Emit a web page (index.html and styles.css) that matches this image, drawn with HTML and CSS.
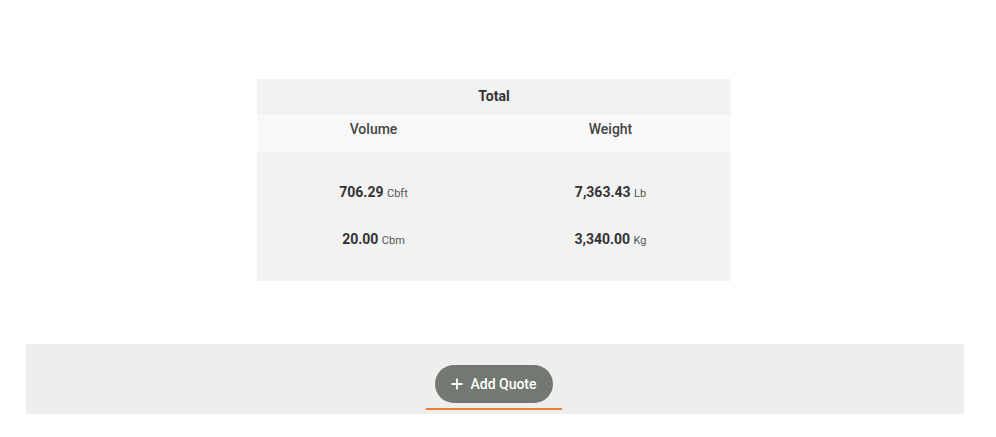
FILE: index.html
```html
<!DOCTYPE html>
<html>
<head>
<meta charset="utf-8">
<link rel="stylesheet" href="styles.css">
</head>
<body>
<div class="page">
  <div class="totals">
    <div class="title">Total</div>
    <div class="head">
      <div class="cell">Volume</div>
      <div class="cell">Weight</div>
    </div>
    <div class="body">
      <div class="row">
        <div class="cell"><b>706.29</b> <span class="unit">Cbft</span></div>
        <div class="cell"><b>7,363.43</b> <span class="unit">Lb</span></div>
      </div>
      <div class="row">
        <div class="cell"><b>20.00</b> <span class="unit">Cbm</span></div>
        <div class="cell"><b>3,340.00</b> <span class="unit">Kg</span></div>
      </div>
    </div>
  </div>
  <div class="bar">
    <div class="btn-wrap">
      <button class="add-btn">
        <svg width="12" height="12" viewBox="0 0 12 12"><path d="M6 0.5V11.5M0.5 6H11.5" stroke="#fff" stroke-width="1.8" fill="none"/></svg>
        <span>Add Quote</span>
      </button>
    </div>
  </div>
</div>
</body>
</html>
```

FILE: styles.css
```css
* { box-sizing: border-box; }
html, body { margin: 0; padding: 0; background: #fff; }
body {
  font-family: Roboto, "Liberation Sans", Arial, sans-serif;
  color: #333;
  font-size: 14px;
}
.page {
  padding-top: 79px;
  display: flex;
  flex-direction: column;
  align-items: center;
}
.totals {
  width: 474px;
  margin-left: -8px;
}
.title {
  height: 36px;
  background: #f2f2f2;
  display: flex;
  align-items: center;
  justify-content: center;
  font-weight: 700;
  font-size: 14px;
  padding-bottom: 3px;
}
.head {
  height: 37px;
  background: #f9f9f9;
  display: grid;
  grid-template-columns: 1fr 1fr;
  align-items: center;
  font-weight: 500;
  color: #444;
  padding-bottom: 9px;
}
.cell { text-align: center; }
.head .cell { padding-right: 4px; }
.body {
  background: #f2f2f2;
  padding: 16px 0 19px;
}
.row {
  height: 47px;
  display: grid;
  grid-template-columns: 1fr 1fr;
  align-items: center;
}
.row .cell { padding-right: 4px; }
.row b { font-weight: 700; font-size: 14px; color: #333; }
.unit { font-size: 11px; color: #555; }
.bar {
  margin-top: 63px;
  width: 938px;
  height: 70px;
  background: #eeeeee;
  display: flex;
  justify-content: center;
  padding-top: 21px;
  margin-left: -6px;
}
.btn-wrap {
  width: 136px;
  height: 45px;
  border-bottom: 2px solid #ec7b34;
  display: flex;
  justify-content: center;
  margin-left: -2px;
}
.add-btn {
  width: 118px;
  height: 38px;
  border: none;
  border-radius: 19px;
  background: #737870;
  color: #fff;
  font-family: Roboto, "Liberation Sans", Arial, sans-serif;
  font-size: 14px;
  font-weight: 500;
  display: flex;
  align-items: center;
  justify-content: center;
  gap: 7px;
  padding: 0 0 0 0;
}
```
